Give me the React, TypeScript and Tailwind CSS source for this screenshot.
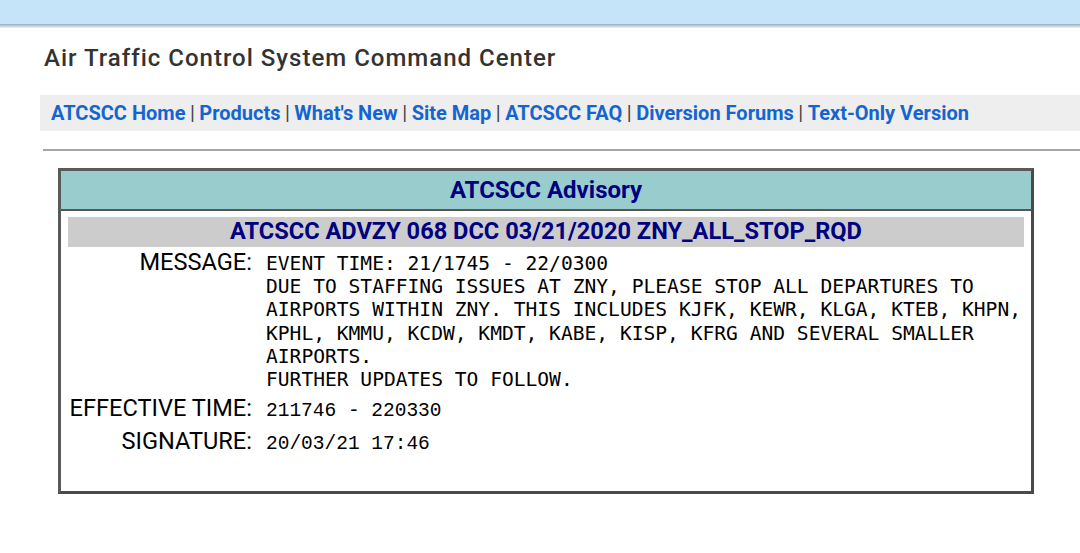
const NAV = [
  'ATCSCC Home',
  'Products',
  "What's New",
  'Site Map',
  'ATCSCC FAQ',
  'Diversion Forums',
  'Text-Only Version',
];

const MESSAGE = [
  'EVENT TIME: 21/1745 - 22/0300',
  'DUE TO STAFFING ISSUES AT ZNY, PLEASE STOP ALL DEPARTURES TO',
  'AIRPORTS WITHIN ZNY. THIS INCLUDES KJFK, KEWR, KLGA, KTEB, KHPN,',
  'KPHL, KMMU, KCDW, KMDT, KABE, KISP, KFRG AND SEVERAL SMALLER',
  'AIRPORTS.',
  'FURTHER UPDATES TO FOLLOW.',
];

export default function App() {
  return (
    <div className="min-h-screen bg-white font-['Roboto',sans-serif] overflow-hidden">
      {/* browser-ish top strip */}
      <div className="h-[24px] bg-[#c5e4fa]" />
      <div className="h-[4px] bg-gradient-to-b from-[#98adbd] to-[#eef2f5]" />

      <div className="ml-[40px]">
        <h1 className="mt-[16px] pl-[4px] text-[24px] leading-[28px] tracking-[1px] font-medium text-[#333333]">
          Air Traffic Control System Command Center
        </h1>

        {/* nav */}
        <div className="mt-[23px] h-[36px] bg-[#eeeeee] flex items-center pl-[11px] text-[20px] font-bold whitespace-nowrap">
          {NAV.map((n, i) => (
            <span key={n} className="flex items-center">
              {i > 0 && <span className="mx-[4.5px] font-normal text-[#444444]">|</span>}
              <a className="text-[#1565d0]">{n}</a>
            </span>
          ))}
        </div>

        <div className="mt-[18px] ml-[3px] h-[2px] bg-[#a6a6a6]" />

        {/* advisory table */}
        <div className="mt-[17px] ml-[18px] w-[976px] h-[326px] border-[3px] border-t-[#5a5a5a] border-l-[#5a5a5a] border-r-[#4a4a4a] border-b-[#4a4a4a] flex flex-col">
          <div className="h-[40px] bg-[#99cccc] flex items-center justify-center border-b-[2px] border-[#555555]">
            <span className="text-[24px] font-bold text-[#000080]">ATCSCC Advisory</span>
          </div>

          <div className="px-[7px] pt-[6px]">
            <div className="h-[30px] bg-[#cccccc] flex items-center justify-center">
              <span className="text-[23.6px] font-bold text-[#000080]">
                ATCSCC ADVZY 068 DCC 03/21/2020 ZNY_ALL_STOP_RQD
              </span>
            </div>

            <div className="mt-[1px] grid grid-cols-[184px_1fr] gap-x-[14px] items-baseline text-black">
              <div className="text-right text-[23.6px] leading-[28px]">MESSAGE:</div>
              <div className="font-['DejaVu_Sans_Mono',monospace] text-[19.6px] leading-[23.2px] whitespace-pre">
                {MESSAGE.map((l) => (
                  <div key={l}>{l}</div>
                ))}
              </div>

              <div className="mt-[1px] text-right text-[23.6px] leading-[32px]">EFFECTIVE TIME:</div>
              <div className="font-['Liberation_Mono',monospace] text-[19.5px]">211746 - 220330</div>

              <div className="text-right text-[23.6px] leading-[31px]">SIGNATURE:</div>
              <div className="font-['Liberation_Mono',monospace] text-[19.5px]">20/03/21 17:46</div>
            </div>
          </div>
        </div>
      </div>
    </div>
  );
}
